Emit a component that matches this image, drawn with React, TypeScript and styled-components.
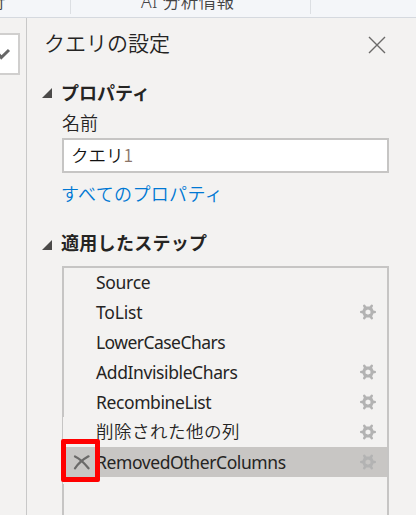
import React from 'react';
import styled, { createGlobalStyle } from 'styled-components';

const GlobalStyle = createGlobalStyle`
  * { box-sizing: border-box; }
  html, body { margin: 0; width: 416px; height: 515px; overflow: hidden; background: #f3f2f1; }
  body { font-family: "Noto Sans", "Noto Sans CJK JP", sans-serif; color: #252423; }
`;

const Window = styled.div`
  width: 416px;
  height: 515px;
  overflow: hidden;
  display: flex;
  flex-direction: column;
`;

const Ribbon = styled.header`
  flex: none;
  height: 18px;
  display: flex;
  overflow: hidden;
  background: #f4f6f9;
  border-bottom: 1px solid #d5d9df;
`;

const RibbonGroup = styled.div<{ $width: number; $indent: number }>`
  width: ${(p) => p.$width}px;
  height: 14px;
  padding-left: ${(p) => p.$indent}px;
  border-right: 1px solid #dcdfe3;
`;

const RibbonLabel = styled.span<{ $shift?: number }>`
  display: block;
  margin-top: -11px;
  margin-left: ${(p) => p.$shift ?? 0}px;
  font: 350 17.5px/24px "Noto Sans", "Noto Sans CJK JP", sans-serif;
  letter-spacing: 0.4px;
  white-space: nowrap;
  color: #444;
`;

const Body = styled.div`
  flex: 1;
  display: flex;
  min-height: 0;
`;

const FormulaEdge = styled.div`
  flex: none;
  width: 26px;
  padding-top: 15px;
`;

const ExpandButton = styled.div`
  width: 20px;
  height: 42px;
  display: flex;
  align-items: center;
  background: #fff;
  border: 2px solid #d0cfce;
  border-left: 0;
`;

const Pane = styled.aside`
  flex: 1;
  min-width: 0;
  display: flex;
  flex-direction: column;
  border-left: 1px solid #c8c8c8;
  padding: 0 27px 0 15px;
`;

const PaneHeader = styled.div`
  height: 56px;
  flex: none;
  display: flex;
  justify-content: space-between;
  padding: 9px 3px 0 2px;
`;

const Title = styled.h1`
  margin: 0;
  font: 350 21px/30px "Noto Sans CJK JP", sans-serif;
  white-space: nowrap;
`;

const CloseIcon = styled.svg`
  margin-top: 9px;
`;

const SectionHead = styled.div`
  height: 38px;
  flex: none;
  display: flex;
  align-items: center;
`;

const Caret = styled.svg`
  flex: none;
  margin-right: 9px;
`;

const SectionTitle = styled.h2<{ $spacing: number; $lift: number }>`
  margin: -${(p) => p.$lift}px 0 0;
  font: 700 18px/26px "Noto Sans CJK JP", sans-serif;
  letter-spacing: ${(p) => p.$spacing}px;
  white-space: nowrap;
`;

const SectionBody = styled.div`
  margin-left: 20px;
  display: flex;
  flex-direction: column;
`;

const FieldLabel = styled.label`
  height: 28px;
  margin-top: -2px;
  font: 350 18px/24px "Noto Sans CJK JP", sans-serif;
`;

const NameField = styled.div`
  height: 35px;
  display: flex;
  align-items: center;
  padding: 0 0 2px 7px;
  background: #fff;
  border: 2px solid #c6c5c4;
  font: 350 17.5px/24px "Noto Sans CJK JP", sans-serif;
  color: #111;
`;

const Digit = styled.span`
  color: #8b7568;
`;

const PropertiesLink = styled.a`
  height: 53px;
  padding-top: 8px;
  font: 350 18px/24px "Noto Sans CJK JP", sans-serif;
  letter-spacing: 0.35px;
  margin-left: -1px;
  color: #0078d4;
  white-space: nowrap;
`;

const StepList = styled.div`
  position: relative;
  height: 270px;
  margin-top: 2px;
  border: 2px solid #c6c5c4;
`;

/* Thinner stretch of the list's left edge. */
const EdgeTrim = styled.div`
  position: absolute;
  left: -1px;
  top: 149px;
  width: 1px;
  height: 67px;
  background: #f3f2f1;
`;

const StepRow = styled.div<{ $selected: boolean }>`
  height: 30px;
  display: flex;
  align-items: center;
  padding-right: 11px;
  background: ${(p) => (p.$selected ? '#c8c6c4' : 'transparent')};
  &:first-child { margin-top: -1px; }
`;

const DeleteCell = styled.div`
  position: relative;
  width: 32px;
  height: 30px;
  flex: none;
  display: flex;
  align-items: center;
  justify-content: center;
`;

const DeleteIcon = styled.svg`
  margin-left: 3px;
`;

const Highlight = styled.div`
  position: absolute;
  z-index: 1;
  left: -3px;
  top: -8px;
  width: 39px;
  height: 43px;
  border: 5px solid #f00;
  border-radius: 2px;
`;

const StepName = styled.span<{ $spacing: number }>`
  flex: 1;
  font-size: 17.5px;
  line-height: 28px;
  font-weight: 400;
  letter-spacing: ${(p) => p.$spacing}px;
  white-space: nowrap;
`;

/* Japanese step names use the lighter cut and sit a little higher. */
const KanjiStepName = styled(StepName)`
  font-family: "Noto Sans CJK JP", sans-serif;
  font-weight: 350;
  margin-top: -2px;
`;

const GearSvg = styled.svg`
  flex: none;
  margin-top: -1px;
`;

function Gear() {
  return (
    <GearSvg width="16" height="16" viewBox="0 0 16 16">
      <path
        d="M1.2 8H4M12 8h2.8M4.3 1.8l1.8 3M11.7 1.8l-1.8 3M4.3 14.2l1.8-3M11.7 14.2l-1.8-3"
        stroke="#b3b3b3"
        strokeWidth="2.6"
        strokeLinecap="round"
      />
      <path
        fillRule="evenodd"
        d="M4.4 2.6h7.2L14.2 8l-2.6 5.4H4.4L1.8 8zM8 5.4a2.6 2.6 0 1 0 0 5.2 2.6 2.6 0 1 0 0-5.2z"
        fill="#b3b3b3"
      />
    </GearSvg>
  );
}

function SectionCaret() {
  return (
    <Caret width="10" height="10" viewBox="0 0 10 10">
      <path d="M10 0v10H0z" fill="#4b4a49" />
    </Caret>
  );
}

const steps = [
  { name: 'Source', gear: false, spacing: -0.3 },
  { name: 'ToList', gear: true, spacing: -0.2 },
  { name: 'LowerCaseChars', gear: false, spacing: -0.55 },
  { name: 'AddInvisibleChars', gear: true, spacing: -0.4 },
  { name: 'RecombineList', gear: true, spacing: -0.4 },
  { name: '削除された他の列', gear: true, spacing: 0.5, kanji: true },
  { name: 'RemovedOtherColumns', gear: true, spacing: -0.4, selected: true },
];

export default function App() {
  return (
    <>
      <GlobalStyle />
      <Window>
        <Ribbon>
          <RibbonGroup $width={71} $indent={0}>
            <RibbonLabel $shift={-12}>行</RibbonLabel>
          </RibbonGroup>
          <RibbonGroup $width={240} $indent={70}>
            <RibbonLabel>AI 分析情報</RibbonLabel>
          </RibbonGroup>
        </Ribbon>
        <Body>
          <FormulaEdge>
            <ExpandButton>
              <svg width="12" height="14" viewBox="0 0 12 14">
                <path d="M-2 6.5l3.3 4L9 3" fill="none" stroke="#666" strokeWidth="3" />
              </svg>
            </ExpandButton>
          </FormulaEdge>
          <Pane>
            <PaneHeader>
              <Title>クエリの設定</Title>
              <CloseIcon width="18" height="18" viewBox="0 0 18 18">
                <path d="M1 1l16 16M17 1L1 17" stroke="#6b6a69" strokeWidth="1.4" />
              </CloseIcon>
            </PaneHeader>
            <SectionHead>
              <SectionCaret />
              <SectionTitle $spacing={0} $lift={3}>プロパティ</SectionTitle>
            </SectionHead>
            <SectionBody>
              <FieldLabel>名前</FieldLabel>
              <NameField>クエリ<Digit>1</Digit></NameField>
              <PropertiesLink>すべてのプロパティ</PropertiesLink>
            </SectionBody>
            <SectionHead>
              <SectionCaret />
              <SectionTitle $spacing={0.3} $lift={6}>適用したステップ</SectionTitle>
            </SectionHead>
            <SectionBody>
              <StepList>
                {steps.map((s) => {
                  const Name = s.kanji ? KanjiStepName : StepName;
                  return (
                    <StepRow key={s.name} $selected={!!s.selected}>
                      <DeleteCell>
                        {s.selected && (
                          <>
                            <DeleteIcon width="17" height="15" viewBox="0 0 17 15">
                              <path
                                d="M2 1.5Q8.5 4.5 15.5 13.3"
                                fill="none"
                                stroke="#6b6a69"
                                strokeWidth="2.2"
                                strokeLinecap="round"
                              />
                              <path
                                d="M15.5 1.3Q7 6 2 13.3"
                                fill="none"
                                stroke="#6b6a69"
                                strokeWidth="2.2"
                                strokeLinecap="round"
                              />
                            </DeleteIcon>
                            <Highlight />
                          </>
                        )}
                      </DeleteCell>
                      <Name $spacing={s.spacing}>{s.name}</Name>
                      {s.gear && <Gear />}
                    </StepRow>
                  );
                })}
                <EdgeTrim />
              </StepList>
            </SectionBody>
          </Pane>
        </Body>
      </Window>
    </>
  );
}
